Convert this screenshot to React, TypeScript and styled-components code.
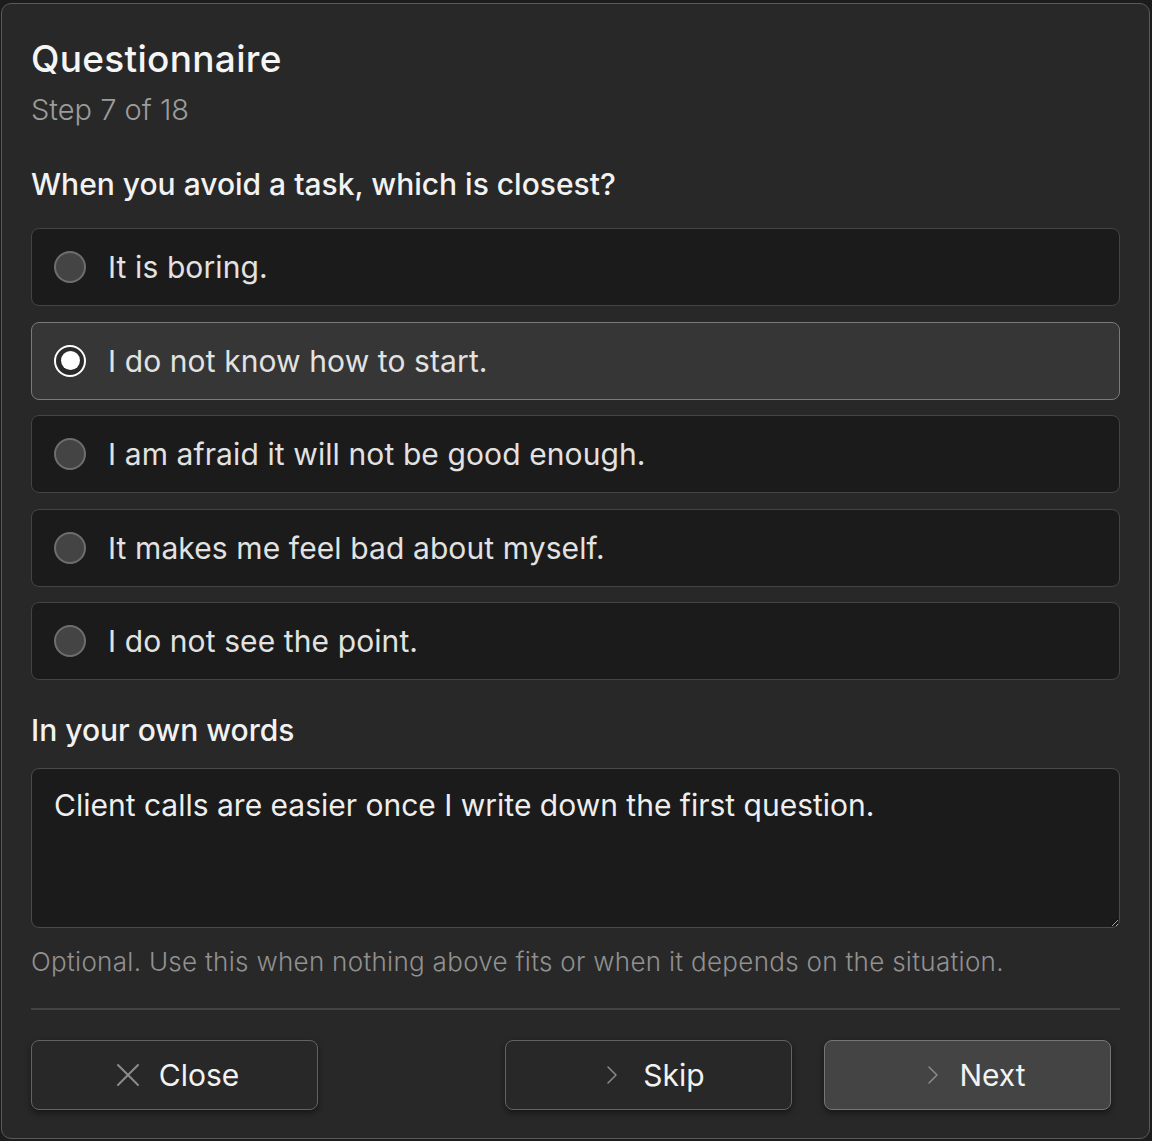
import React, { useState } from 'react';
import styled, { createGlobalStyle } from 'styled-components';
import { X, ChevronRight } from 'lucide-react';

const GlobalStyle = createGlobalStyle`
  html, body {
    margin: 0;
    padding: 0;
    background: #1c1c1c;
  }
  body {
    font-family: Inter, "Noto Sans", "Liberation Sans", sans-serif;
  }
  * {
    box-sizing: border-box;
  }
`;

const Panel = styled.div`
  margin: 3px 2px 2px 1px;
  height: 1136px;
  background: #282828;
  border: 1px solid #595959;
  border-radius: 10px;
  padding: 35px 29px 28px 29px;
  display: flex;
  flex-direction: column;
  color: #f2f2f2;
`;

const Title = styled.h1`
  margin: 0;
  font-size: 37px;
  line-height: 40px;
  font-weight: 500;
  letter-spacing: 0.3px;
  color: #f5f5f5;
`;

const Subtitle = styled.div`
  margin-top: 13px;
  font-size: 29px;
  line-height: 36px;
  font-weight: 300;
  color: #9c9c9c;
`;

const Question = styled.h2`
  margin: 38px 0 0 0;
  font-size: 30px;
  line-height: 36px;
  font-weight: 500;
  color: #f2f2f2;
`;

const OptionList = styled.div`
  margin-top: 26px;
  display: flex;
  flex-direction: column;
  gap: 15.5px;
`;

const Option = styled.label<{ $selected: boolean }>`
  height: 78px;
  display: flex;
  align-items: center;
  gap: 22px;
  padding: 0 22px;
  border-radius: 8px;
  border: 1.5px solid ${p => (p.$selected ? '#7a7a7a' : '#444444')};
  background: ${p => (p.$selected ? '#363636' : '#1b1b1b')};
  cursor: pointer;
`;

const Radio = styled.span<{ $checked: boolean }>`
  width: 32px;
  height: 32px;
  flex: none;
  border-radius: 50%;
  border: ${p => (p.$checked ? '2.5px solid #ffffff' : '2px solid #6e6e6e')};
  background: ${p => (p.$checked ? '#2b2b2b' : '#444444')};
  display: flex;
  align-items: center;
  justify-content: center;

  &::after {
    content: '';
    display: ${p => (p.$checked ? 'block' : 'none')};
    width: 19px;
    height: 19px;
    border-radius: 50%;
    background: #ffffff;
  }
`;

const OptionText = styled.span`
  font-size: 30px;
  font-weight: 400;
  letter-spacing: 0.1px;
  color: #e2e2e2;
`;

const SectionLabel = styled.h3`
  margin: 32px 0 0 0;
  font-size: 30px;
  line-height: 36px;
  font-weight: 500;
  color: #f2f2f2;
`;

const TextArea = styled.textarea`
  margin-top: 20px;
  height: 160px;
  width: 100%;
  resize: vertical;
  background: #1b1b1b;
  border: 1.5px solid #4a4a4a;
  border-radius: 8px;
  padding: 18px 22px;
  font-family: inherit;
  font-size: 30px;
  line-height: 36px;
  color: #eeeeee;
  outline: none;
`;

const Hint = styled.div`
  margin-top: 18px;
  font-size: 26px;
  line-height: 32px;
  font-weight: 300;
  letter-spacing: 0.3px;
  color: #919191;
`;

const Divider = styled.hr`
  margin: 30px 0 0 0;
  border: none;
  border-top: 2px solid #444444;
`;

const Footer = styled.div`
  margin-top: 30px;
  display: flex;
  align-items: center;
  gap: 32px;
  padding-right: 9px;
`;

const Spacer = styled.div`
  flex: 1;
`;

const Button = styled.button<{ $primary?: boolean; $gap: number; $shift: number }>`
  width: 287px;
  height: 70px;
  display: flex;
  align-items: center;
  justify-content: center;
  gap: ${p => p.$gap}px;
  padding: 0 0 0 ${p => p.$shift}px;
  border-radius: 8px;
  border: 1.5px solid ${p => (p.$primary ? '#767676' : '#636363')};
  background: ${p => (p.$primary ? '#444444' : '#282828')};
  box-shadow: 0 3px 6px rgba(0, 0, 0, 0.45);
  font-family: inherit;
  font-size: 30px;
  font-weight: 400;
  color: #f2f2f2;
  cursor: pointer;

  svg {
    color: #8c8c8c;
    margin: 0 -12px;
  }
`;

const options = [
  'It is boring.',
  'I do not know how to start.',
  'I am afraid it will not be good enough.',
  'It makes me feel bad about myself.',
  'I do not see the point.',
];

export default function App() {
  const [selected, setSelected] = useState(1);
  const [text, setText] = useState('Client calls are easier once I write down the first question.');

  return (
    <>
      <GlobalStyle />
      <Panel>
        <Title>Questionnaire</Title>
        <Subtitle>Step 7 of 18</Subtitle>
        <Question>When you avoid a task, which is closest?</Question>
        <OptionList>
          {options.map((o, i) => (
            <Option key={o} $selected={selected === i} onClick={() => setSelected(i)}>
              <Radio $checked={selected === i} />
              <OptionText>{o}</OptionText>
            </Option>
          ))}
        </OptionList>
        <SectionLabel>In your own words</SectionLabel>
        <TextArea value={text} onChange={e => setText(e.target.value)} />
        <Hint>Optional. Use this when nothing above fits or when it depends on the situation.</Hint>
        <Divider />
        <Footer>
          <Button $gap={23} $shift={10}>
            <X size={40} strokeWidth={1.2} />
            Close
          </Button>
          <Spacer />
          <Button $gap={27} $shift={16}>
            <ChevronRight size={32} strokeWidth={1.1} />
            Skip
          </Button>
          <Button $primary $gap={22} $shift={20}>
            <ChevronRight size={32} strokeWidth={1.1} />
            Next
          </Button>
        </Footer>
      </Panel>
    </>
  );
}
